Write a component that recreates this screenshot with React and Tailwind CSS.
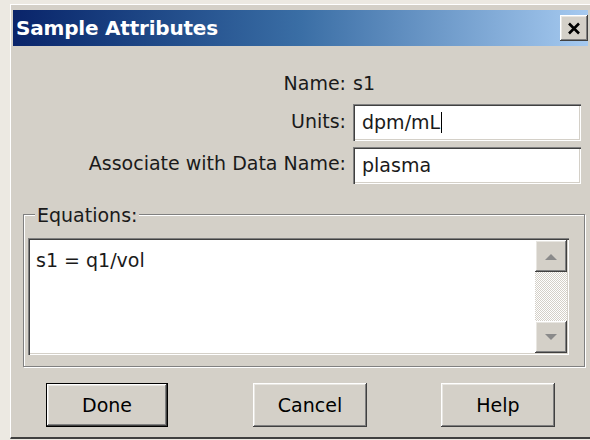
import { useState } from "react";

const raised =
  "shadow-[inset_-1px_-1px_#404040,inset_1px_1px_#ffffff,inset_-2px_-2px_#808080,inset_2px_2px_#e8e6e1]";
const sunken =
  "shadow-[inset_1px_1px_#808080,inset_2px_2px_#404040,inset_-1px_-1px_#ffffff,inset_-2px_-2px_#d4d0c8]";

function ScrollArrow({ up }) {
  return (
    <div className={`w-[32px] h-[32px] bg-[#d4d0c8] flex items-center justify-center ${raised}`}>
      <svg width="12" height="7" viewBox="0 0 12 7">
        {up ? (
          <polygon points="0,7 12,7 6,1" fill="#8a8a8a" />
        ) : (
          <polygon points="0,0 12,0 6,6" fill="#8a8a8a" />
        )}
      </svg>
    </div>
  );
}

function TextField({ value, caret }) {
  return (
    <div className={`h-[37px] bg-white flex items-center pl-[9px] ${sunken}`}>
      <span>{value}</span>
      {caret && <span className="w-px h-[21px] bg-black ml-[1px]"></span>}
    </div>
  );
}

function Button({ label, primary, width }) {
  return (
    <button
      className={`h-[44px] bg-[#d4d0c8] text-black ${
        primary ? "border border-black" : ""
      } ${width}`}
    >
      <div className={`w-full h-full flex items-center justify-center ${raised}`}>{label}</div>
    </button>
  );
}

export default function App() {
  const [units] = useState("dpm/mL");
  const [dataName] = useState("plasma");

  return (
    <div className="w-[590px] h-[440px] bg-[#ece9e2] pt-[4px] pl-[10px] overflow-hidden font-['DejaVu_Sans',sans-serif] text-[19px] text-[#1a1a1a]">
      <div className="w-[584px] h-[435px] bg-[#d4d0c8] border-t border-l border-white border-b-2 border-b-[#404040] pt-[5px] pl-[2px]">
        {/* title bar */}
        <div className="w-[575px] h-[36px] flex items-center justify-between pl-[3px] pr-0 bg-gradient-to-r from-[#0a246a] via-[#3a6ea5] to-[#a6caf0]">
          <span className="text-white font-bold text-[20px] tracking-[-0.2px]">Sample Attributes</span>
          <div className={`w-[28px] h-[26px] bg-[#d4d0c8] flex items-center justify-center ${raised}`}>
            <svg width="14" height="13" viewBox="0 0 14 13">
              <path d="M2 1.5 L12 11.5 M12 1.5 L2 11.5" stroke="#000" strokeWidth="2.6" />
            </svg>
          </div>
        </div>

        {/* attributes */}
        <div className="mt-[22px] ml-[1px] grid grid-cols-[332px_228px] gap-x-[7px] gap-y-[6px]">
          <div className="h-[30px] flex items-center justify-end">Name:</div>
          <div className="h-[30px] flex items-center">s1</div>
          <div className="flex items-center justify-end pb-[2px]">Units:</div>
          <TextField value={units} caret />
          <div className="flex items-center justify-end pb-[4px]">Associate with Data Name:</div>
          <TextField value={dataName} />
        </div>

        {/* equations group */}
        <div className="relative mt-[30px] ml-[10px] w-[562px] h-[153px] border border-[#808080] shadow-[inset_1px_1px_#ffffff,1px_1px_#ffffff] pt-[23px] pl-[4px]">
          <span className="absolute left-[11px] top-[-14px] px-[2px] bg-[#d4d0c8]">Equations:</span>
          <div className={`w-[541px] h-[117px] bg-white flex p-[2px] ${sunken}`}>
            <div className="flex-1 pl-[6px] pt-[9px] leading-[22px]">s1 = q1/vol</div>
            <div className="w-[32px] flex flex-col bg-[image:repeating-conic-gradient(#d4d0c8_0%_25%,#ffffff_0%_50%)] bg-[length:2px_2px]">
              <ScrollArrow up />
              <div className="flex-1"></div>
              <ScrollArrow />
            </div>
          </div>
        </div>

        {/* buttons */}
        <div className="mt-[16px] flex">
          <div className="ml-[33px]">
            <Button label="Done" primary width="w-[122px]" />
          </div>
          <div className="ml-[85px]">
            <Button label="Cancel" width="w-[114px]" />
          </div>
          <div className="ml-[74px]">
            <Button label="Help" width="w-[114px]" />
          </div>
        </div>
      </div>
    </div>
  );
}
